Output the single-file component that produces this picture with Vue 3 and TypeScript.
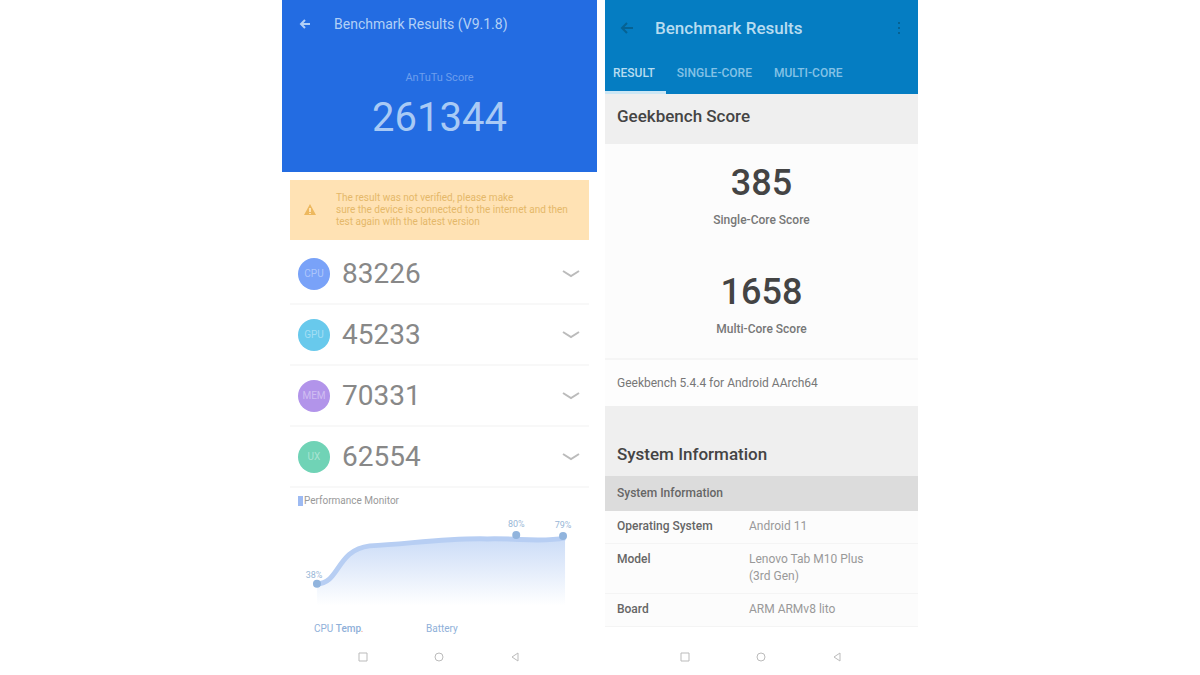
<script setup lang="ts">
interface Score {
  id: string
  label: string
  value: number
  tone: string
}

interface Fact {
  name: string
  value: string[]
}

const scores: Score[] = [
  { id: 'cpu', label: 'CPU', value: 83226, tone: 'blue' },
  { id: 'gpu', label: 'GPU', value: 45233, tone: 'cyan' },
  { id: 'mem', label: 'MEM', value: 70331, tone: 'violet' },
  { id: 'ux', label: 'UX', value: 62554, tone: 'green' },
]

const tabs: string[] = ['RESULT', 'SINGLE-CORE', 'MULTI-CORE']

const facts: Fact[] = [
  { name: 'Operating System', value: ['Android 11'] },
  { name: 'Model', value: ['Lenovo Tab M10 Plus', '(3rd Gen)'] },
  { name: 'Board', value: ['ARM ARMv8 lito'] },
]
</script>

<template>
  <main class="stage">
    <section class="phone left">
      <header class="hero">
        <div class="bar">
          <button class="icon" type="button" aria-label="Back">
            <svg width="14" height="14" viewBox="0 0 14 14"><path d="M12 7H3M7 3L3 7l4 4" /></svg>
          </button>
          <h1>Benchmark Results (V9.1.8)</h1>
        </div>
        <p class="caption">AnTuTu Score</p>
        <p class="total">261344</p>
      </header>

      <div class="notice">
        <svg width="16" height="16" viewBox="0 0 16 16">
          <path d="M8 2l6 11H2z" /><path class="mark" d="M8 6v4M8 11v1" />
        </svg>
        <p>The result was not verified, please make<br>sure the device is connected to the internet and then<br>test again with the latest version</p>
      </div>

      <ul class="scores">
        <li v-for="s in scores" :key="s.id">
          <span class="badge" :class="s.tone">{{ s.label }}</span>
          <span class="value">{{ s.value }}</span>
          <button class="icon more" type="button" :aria-label="`Show ${s.label} details`">
            <svg width="20" height="10" viewBox="0 0 20 10"><path d="M2 2l8 5 8-5" /></svg>
          </button>
        </li>
      </ul>

      <section class="monitor">
        <h2>Performance Monitor</h2>
        <svg class="chart" viewBox="0 0 284 108">
          <defs>
            <linearGradient id="fade" x1="0" y1="0" x2="0" y2="1">
              <stop offset="0" stop-color="#cbdcf7" />
              <stop offset="1" stop-color="#ffffff" />
            </linearGradient>
          </defs>
          <path class="area" d="M19 74C42 74 38 40 72 36C112 34 148 28 190 29C220 28 244 33 268 28V96H19Z" />
          <path class="line" d="M19 74C42 74 38 40 72 36C112 34 148 28 190 29C220 28 244 33 268 28" />
          <circle cx="19" cy="74" r="4" /><circle cx="219" cy="25" r="4" /><circle cx="266" cy="26" r="4" />
          <text x="16" y="68">38%</text><text x="219" y="17">80%</text><text x="266" y="18">79%</text>
        </svg>
        <p class="legend"><span>CPU <b>Temp</b><i>.</i></span><span>Battery</span></p>
      </section>

      <nav class="keys" aria-label="Left device navigation">
        <button class="icon" type="button" aria-label="Recent"><svg width="12" height="12" viewBox="0 0 12 12"><path d="M2 2h8v8H2z" /></svg></button>
        <button class="icon" type="button" aria-label="Home"><svg width="12" height="12" viewBox="0 0 12 12"><circle cx="6" cy="6" r="4" /></svg></button>
        <button class="icon" type="button" aria-label="Back"><svg width="12" height="12" viewBox="0 0 12 12"><path d="M9 2v8L3 6z" /></svg></button>
      </nav>
    </section>

    <section class="phone right">
      <header class="top">
        <div class="bar">
          <button class="icon" type="button" aria-label="Back">
            <svg width="16" height="16" viewBox="0 0 16 16"><path d="M14 8H3M8 3L3 8l5 5" /></svg>
          </button>
          <h1>Benchmark Results</h1>
          <button class="icon options" type="button" aria-label="More options">
            <svg width="6" height="16" viewBox="0 0 6 16"><path d="M2 3h2M2 8h2M2 13h2" /></svg>
          </button>
        </div>
        <nav class="tabs" aria-label="Result sections">
          <button v-for="(t, i) in tabs" :key="t" type="button" :class="{ active: i === 0 }">{{ t }}</button>
        </nav>
      </header>

      <h2 class="band">Geekbench Score</h2>
      <div class="results">
        <div class="result"><strong>385</strong><span>Single-Core Score</span></div>
        <div class="result"><strong>1658</strong><span>Multi-Core Score</span></div>
      </div>
      <p class="version">Geekbench 5.4.4 for Android AArch64</p>
      <h2 class="band tall">System Information</h2>
      <table>
        <colgroup><col class="names"><col></colgroup>
        <thead>
          <tr><th colspan="2" scope="colgroup">System Information</th></tr>
        </thead>
        <tbody>
          <tr v-for="f in facts" :key="f.name">
            <th scope="row">{{ f.name }}</th>
            <td><div v-for="v in f.value" :key="v">{{ v }}</div></td>
          </tr>
        </tbody>
      </table>

      <nav class="keys" aria-label="Right device navigation">
        <button class="icon" type="button" aria-label="Recent"><svg width="12" height="12" viewBox="0 0 12 12"><path d="M2 2h8v8H2z" /></svg></button>
        <button class="icon" type="button" aria-label="Home"><svg width="12" height="12" viewBox="0 0 12 12"><circle cx="6" cy="6" r="4" /></svg></button>
        <button class="icon" type="button" aria-label="Back"><svg width="12" height="12" viewBox="0 0 12 12"><path d="M9 2v8L3 6z" /></svg></button>
      </nav>
    </section>
  </main>
</template>

<style>
body { margin: 0; background: #fff; }
</style>

<style scoped>
* { box-sizing: border-box; }
h1, h2, p, ul { margin: 0; padding: 0; }
button { border: 0; padding: 0; background: none; font: inherit; color: inherit; }
svg { display: block; fill: none; stroke: currentColor; stroke-width: 2; }
.stage {
  display: grid;
  grid-template-columns: 316fr 314fr;
  gap: 8px;
  width: 53%;
  min-width: 600px;
  margin: 0 auto;
  min-height: 100vh;
  font-family: Roboto, "Liberation Sans", sans-serif;
  color: #555;
}
.phone { display: flex; flex-direction: column; min-width: 0; }
.bar { display: flex; align-items: center; }
.icon { display: flex; align-items: center; justify-content: center; }

.hero { padding: 12px 16px 24px; background: #236ce2; color: #b2d0f6; text-align: center; }
.hero .bar { height: 24px; gap: 22px; }
.hero h1 { font-size: 14px; font-weight: 400; line-height: 24px; }
.caption { margin-top: 32px; font-size: 11px; line-height: 20px; color: #6d9eed; }
.total { font-size: 40px; line-height: 60px; color: #a9caf5; }
.notice {
  display: flex;
  align-items: center;
  gap: 18px;
  margin: 8px 8px 0;
  padding: 12px;
  background: #ffe2b4;
  color: #e5b869;
  font-size: 10px;
  line-height: 12px;
}
.notice svg { flex: none; stroke: none; fill: #edb85e; }
.notice .mark { stroke: #ffe2b4; }
.scores { list-style: none; margin: 4px 8px 0; }
.scores li { display: flex; align-items: center; height: 61px; padding: 0 8px; border-bottom: 2px solid #f8f8f8; }
.badge {
  display: grid;
  place-items: center;
  width: 32px;
  height: 32px;
  border-radius: 50%;
  font-size: 10px;
  color: rgba(255, 255, 255, 0.4);
}
.blue { background: #79a2f8; }
.cyan { background: #68c9ec; }
.violet { background: #b294ea; }
.green { background: #70d3b6; }
.value { margin-left: 12px; font-size: 28px; color: #888; }
.more { margin-left: auto; color: #bbb; }
.monitor { padding: 8px 16px 0; }
.monitor h2 {
  padding-left: 1px;
  border-left: 5px solid #9dbaf2;
  font-size: 10px;
  font-weight: 400;
  line-height: 10px;
  color: #999;
}
.chart { width: 100%; height: auto; margin-top: 4px; overflow: visible; }
.area { fill: url(#fade); stroke: none; }
.line { stroke: #b7cef3; stroke-width: 5; }
.chart circle { fill: #91b4dd; stroke: none; }
.chart text { fill: #97b6d6; stroke: none; font-size: 9px; text-anchor: middle; }
.legend { display: grid; grid-template-columns: 112px 1fr; margin-top: 4px; padding-left: 16px; font-size: 10px; line-height: 14px; color: #8fb0d9; }
.legend b { font-weight: 500; }
.legend i { color: #f09a92; }
.keys { display: flex; justify-content: center; gap: 64px; height: 36px; margin-top: auto; align-items: center; color: #bbb; }
.keys svg { stroke-width: 1; }

.top { padding-top: 14px; background: #057dc2; color: #b7dcf0; }
.top .bar { height: 28px; padding: 0 16px 0 14px; gap: 20px; }
.top h1 { font-size: 17px; font-weight: 500; }
.top .icon { color: #066293; }
.options { margin-left: auto; }
.tabs { display: flex; height: 52px; font-size: 12px; font-weight: 500; color: #84c2e6; }
.tabs button { padding: 20px 11px 8px; line-height: 20px; border-bottom: 3px solid transparent; }
.tabs .active { padding-left: 8px; color: #b7dcf0; border-color: #cce7f5; }
.band { padding: 8px 12px 14px; background: #efefef; font-size: 17px; font-weight: 500; line-height: 28px; color: #444; }
.results { display: grid; gap: 41px; padding: 18px 0 19px; background: #fcfcfc; }
.result { display: flex; flex-direction: column; align-items: center; }
.result strong { font-size: 36px; font-weight: 500; line-height: 42px; color: #444; }
.result span { margin-top: 6px; font-size: 12px; font-weight: 500; line-height: 20px; color: #777; }
.version { border-top: 2px solid #f5f5f5; padding: 0 12px; background: #fdfdfd; font-size: 12px; line-height: 46px; color: #777; }
.tall { padding: 34px 12px 8px; }
table { width: 100%; border-collapse: collapse; table-layout: fixed; background: #fcfcfc; font-size: 12px; line-height: 17px; }
.names { width: 46%; }
th, td { padding: 7px 12px 8px; text-align: left; vertical-align: top; font-weight: 500; color: #666; }
thead th { padding: 9px 12px; background: #dcdcdc; }
tbody tr { border-bottom: 1px solid #f4f4f4; }
td { padding-left: 0; font-weight: 400; color: #999; }
</style>
